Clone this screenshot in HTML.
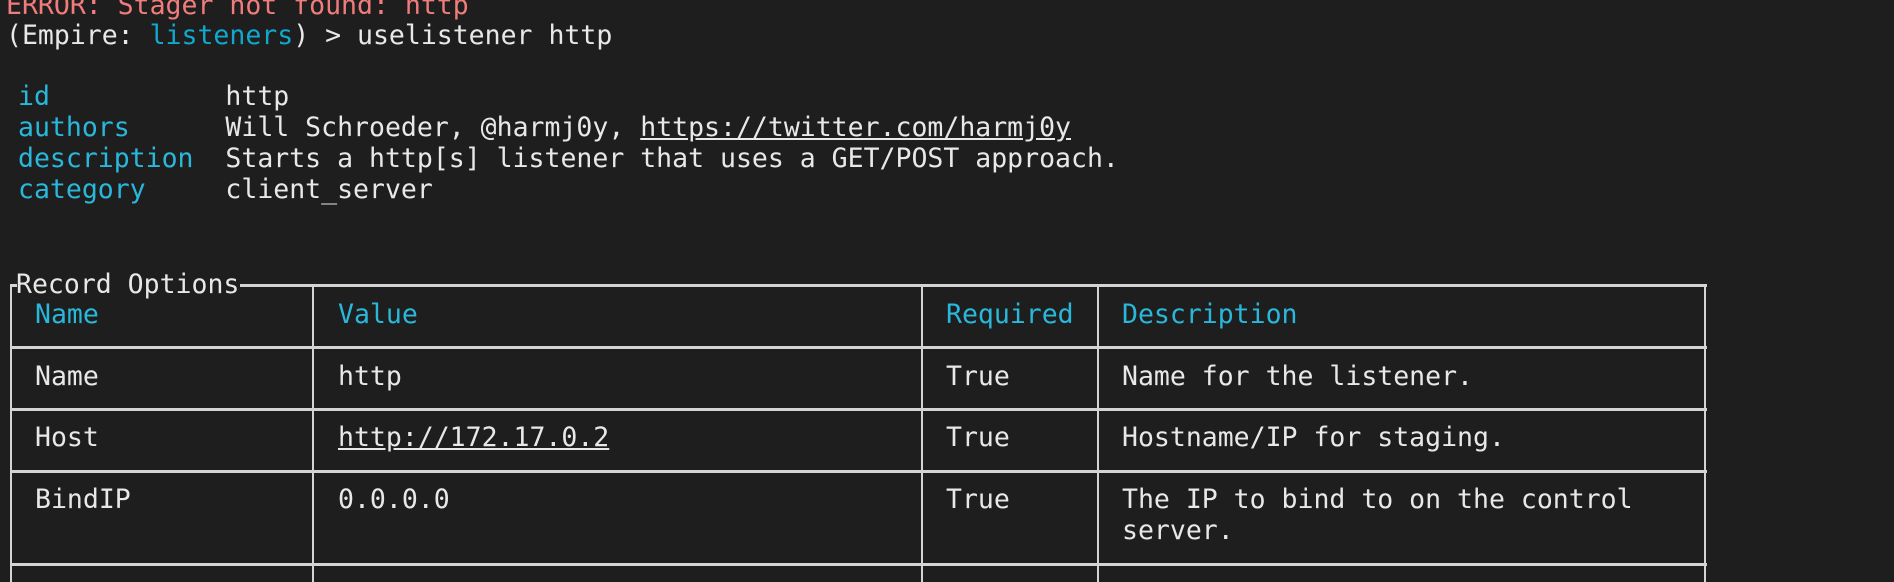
<!DOCTYPE html>
<html><head><meta charset="utf-8"><style>
html,body{margin:0;padding:0;background:#1e1e1e;width:1894px;height:582px;overflow:hidden;position:relative}
.t{position:absolute;white-space:pre;font-family:"DejaVu Sans Mono","Liberation Mono",monospace;font-size:26.5px;line-height:31px;color:#e8e8e8}
.c{color:#29b8db}.b{color:#11a8cd}.r{color:#f17c7c}.u{text-decoration:underline}
.h{position:absolute;height:3px;background:#d4d4d4}
.v{position:absolute;width:2px;background:#d4d4d4}
</style></head><body>
<div class="t r" style="left:6px;top:-10px">ERROR: Stager not found: http</div>
<div class="t" style="left:6px;top:20px">(Empire: <span class="b">listeners</span>) &gt; uselistener http</div>
<div class="t" style="left:18px;top:81px"><span class="c">id</span>           http</div>
<div class="t" style="left:18px;top:112px"><span class="c">authors</span>      Will Schroeder, @harmj0y, <span class="u">https://twitter.com/harmj0y</span></div>
<div class="t" style="left:18px;top:143px"><span class="c">description</span>  Starts a http[s] listener that uses a GET/POST approach.</div>
<div class="t" style="left:18px;top:174px"><span class="c">category</span>     client_server</div>

<div class="h" style="left:240px;top:284px;width:1467px"></div>
<div class="h" style="left:11px;top:284px;width:6px"></div>
<div class="v" style="left:10px;top:284px;height:298px"></div>
<div class="t" style="left:16px;top:269px">Record Options</div>
<div class="h" style="left:10px;top:346px;width:1697px"></div>
<div class="h" style="left:10px;top:408px;width:1697px"></div>
<div class="h" style="left:10px;top:470px;width:1697px"></div>
<div class="h" style="left:10px;top:563px;width:1697px"></div>
<div class="v" style="left:312px;top:285px;height:297px"></div>
<div class="v" style="left:921px;top:285px;height:297px"></div>
<div class="v" style="left:1097px;top:285px;height:297px"></div>
<div class="v" style="left:1704px;top:285px;height:297px"></div>

<div class="t c" style="left:35px;top:299px">Name</div>
<div class="t c" style="left:338px;top:299px">Value</div>
<div class="t c" style="left:946px;top:299px">Required</div>
<div class="t c" style="left:1122px;top:299px">Description</div>

<div class="t" style="left:35px;top:361px">Name</div>
<div class="t" style="left:338px;top:361px">http</div>
<div class="t" style="left:946px;top:361px">True</div>
<div class="t" style="left:1122px;top:361px">Name for the listener.</div>

<div class="t" style="left:35px;top:422px">Host</div>
<div class="t u" style="left:338px;top:422px">http://172.17.0.2</div>
<div class="t" style="left:946px;top:422px">True</div>
<div class="t" style="left:1122px;top:422px">Hostname/IP for staging.</div>

<div class="t" style="left:35px;top:484px">BindIP</div>
<div class="t" style="left:338px;top:484px">0.0.0.0</div>
<div class="t" style="left:946px;top:484px">True</div>
<div class="t" style="left:1122px;top:484px">The IP to bind to on the control
server.</div>
</body></html>
